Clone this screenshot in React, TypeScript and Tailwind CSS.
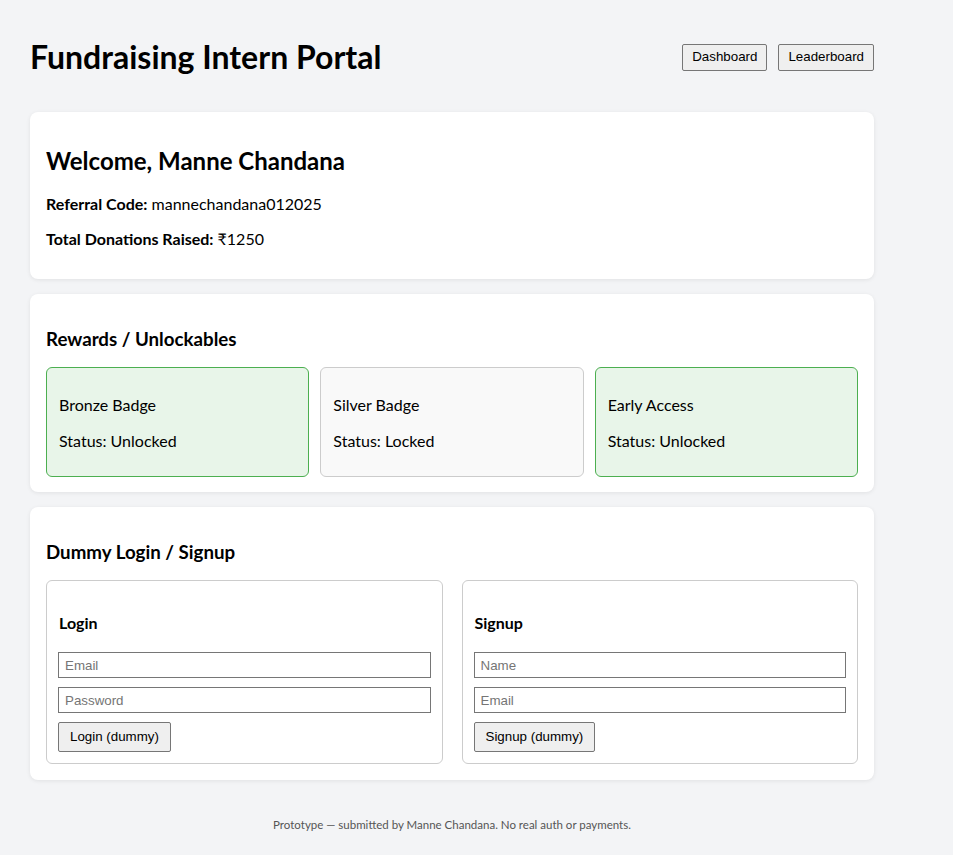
import React from 'react';

interface Reward {
  name: string;
  unlocked: boolean;
}

const rewards: Reward[] = [
  { name: 'Bronze Badge', unlocked: true },
  { name: 'Silver Badge', unlocked: false },
  { name: 'Early Access', unlocked: true },
];

const formFont = "font-['Liberation_Sans',Arial,sans-serif] text-[13.33px]";

const Card = (props: { children: React.ReactNode; className?: string }) => (
  <section
    className={`rounded-lg bg-white p-4 shadow-[0_1px_4px_rgba(0,0,0,0.08)] ${props.className ?? ''}`}
  >
    {props.children}
  </section>
);

const Field = (props: { placeholder: string; type?: string }) => (
  <input
    type={props.type ?? 'text'}
    placeholder={props.placeholder}
    className={`block h-[26px] w-full border border-[#767676] bg-white px-[6px] ${formFont} text-black placeholder:text-[#757575] outline-none`}
  />
);

const FormBox = (props: {
  title: string;
  fields: { placeholder: string; type?: string }[];
  action: string;
}) => (
  <div className="rounded-[6px] border border-[#cccccc] px-[11px] pt-3 pb-[11px]">
    <h4 className="mt-5 ml-px text-[16px] leading-5 font-bold">{props.title}</h4>
    <div className="mt-[19px] flex flex-col gap-[9px]">
      {props.fields.map((f) => (
        <Field key={f.placeholder} placeholder={f.placeholder} type={f.type} />
      ))}
      <div>
        <button
          className={`h-[30px] rounded-[2px] border border-[#767676] bg-[#efefef] px-[11px] ${formFont} text-black`}
        >
          {props.action}
        </button>
      </div>
    </div>
  </div>
);

export default function App() {
  return (
    <div className="min-h-screen bg-[#f3f4f6] font-['Lato','Noto_Sans',sans-serif] text-black">
      <div className="ml-[30px] w-[844px] pt-[37px] pb-[30px]">
        {/* header */}
        <header className="flex h-10 items-center justify-between">
          <h1 className="text-[32px] leading-10 font-bold">
            Fundraising Intern Portal
          </h1>
          <nav className="flex gap-[11px]">
            {['Dashboard', 'Leaderboard'].map((label) => (
              <button
                key={label}
                className={`h-[27px] rounded-[2px] border border-[#767676] bg-[#efefef] px-[9px] ${formFont} text-black`}
              >
                {label}
              </button>
            ))}
          </nav>
        </header>

        {/* welcome */}
        <Card className="mt-[35px] pb-[30px]">
          <h2 className="mt-[17px] text-[24px] leading-8 font-bold">
            Welcome, Manne Chandana
          </h2>
          <p className="mt-[17px] text-[16px] leading-5">
            <span className="font-bold">Referral Code:</span> mannechandana012025
          </p>
          <p className="mt-[15px] text-[16px] leading-5">
            <span className="font-bold">Total Donations Raised:</span> ₹1250
          </p>
        </Card>

        {/* rewards */}
        <Card className="mt-[15px] pb-[15px]">
          <h3 className="mt-[17px] text-[18.72px] leading-6 font-bold">
            Rewards / Unlockables
          </h3>
          <div className="mt-4 grid grid-cols-3 gap-[11px]">
            {rewards.map((r) => (
              <div
                key={r.name}
                className={`rounded-[6px] border px-3 pt-3 pb-[25px] text-[16px] leading-5 ${
                  r.unlocked
                    ? 'border-[#4caf50] bg-[#e8f5e9]'
                    : 'border-[#cccccc] bg-[#f9f9f9]'
                }`}
              >
                <p className="mt-[15px]">{r.name}</p>
                <p className="mt-[16px]">
                  Status: {r.unlocked ? 'Unlocked' : 'Locked'}
                </p>
              </div>
            ))}
          </div>
        </Card>

        {/* login / signup */}
        <Card className="mt-[15px]">
          <h3 className="mt-[17px] text-[18.72px] leading-6 font-bold">
            Dummy Login / Signup
          </h3>
          <div className="mt-4 grid grid-cols-2 gap-[19px]">
            <FormBox
              title="Login"
              fields={[
                { placeholder: 'Email', type: 'email' },
                { placeholder: 'Password', type: 'password' },
              ]}
              action="Login (dummy)"
            />
            <FormBox
              title="Signup"
              fields={[{ placeholder: 'Name' }, { placeholder: 'Email', type: 'email' }]}
              action="Signup (dummy)"
            />
          </div>
        </Card>

        <footer className="mt-[37px] text-center text-[11.5px] leading-4 text-[#555555]">
          Prototype — submitted by Manne Chandana. No real auth or payments.
        </footer>
      </div>
    </div>
  );
}
